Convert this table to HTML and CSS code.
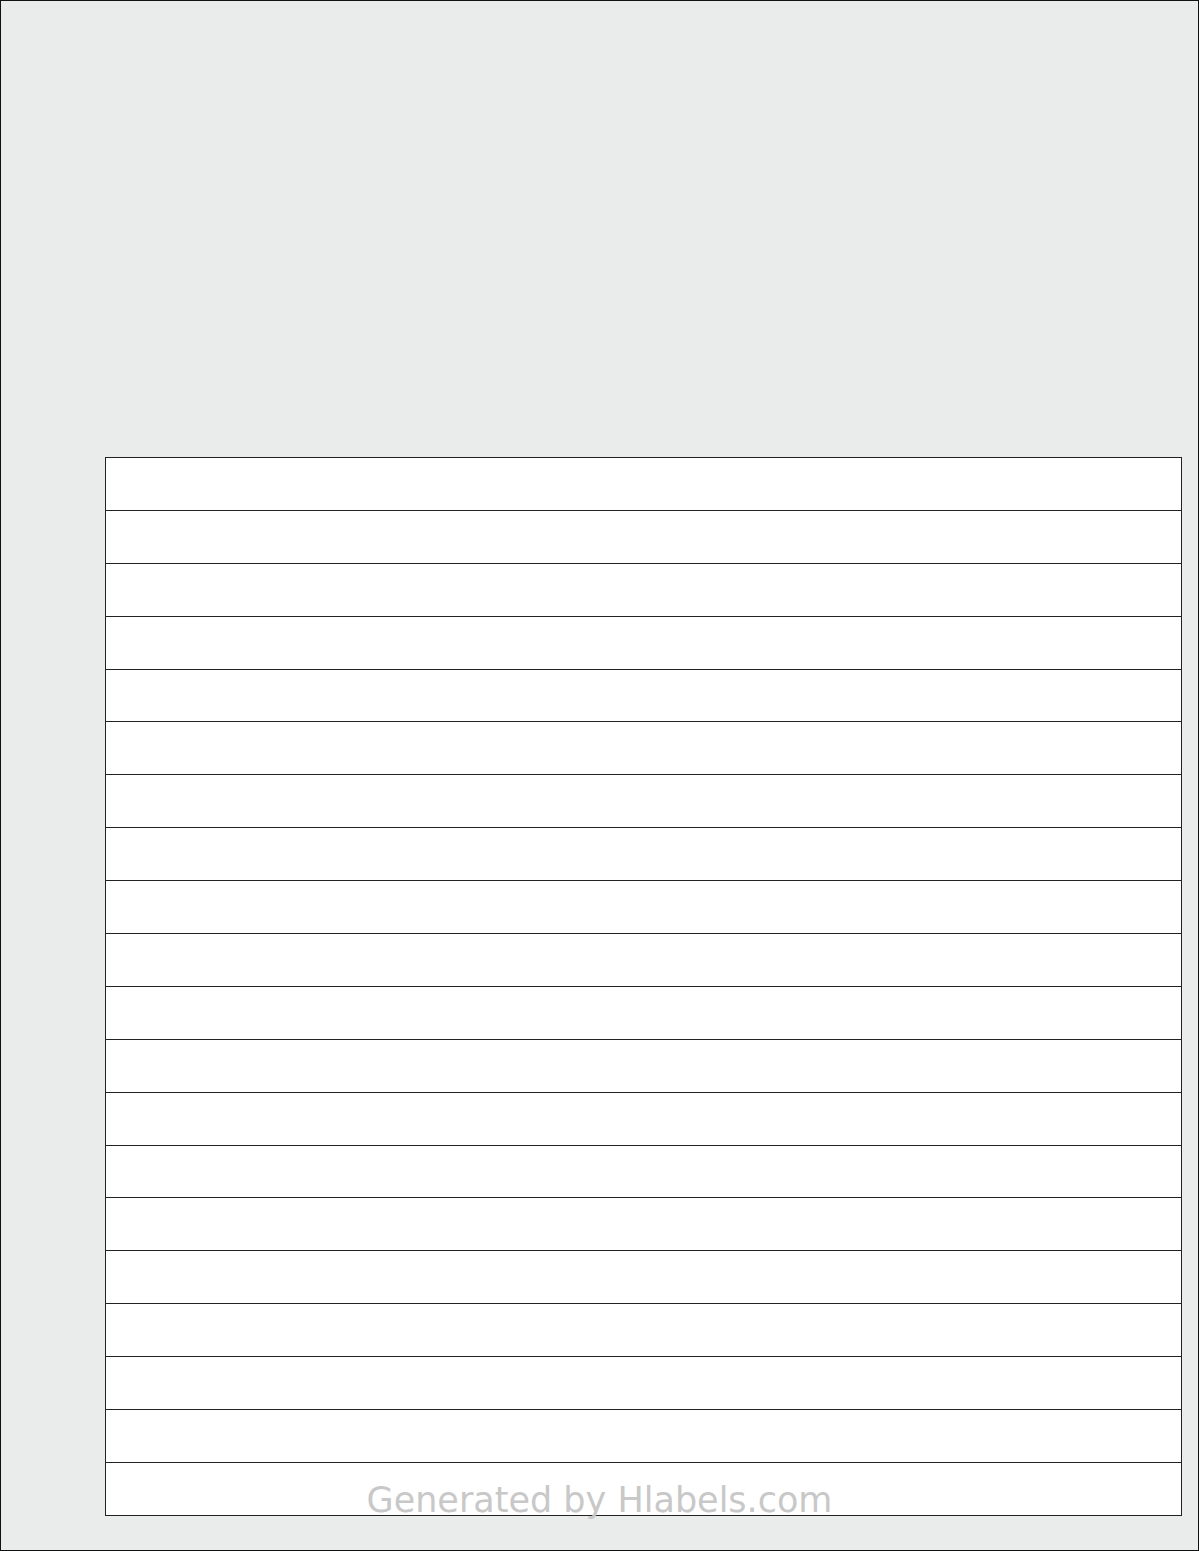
FILE: index.html
```html
<!DOCTYPE html>
<html lang="en">
<head>
    <meta charset="UTF-8">
    <title>Label Sheet</title>
    <link rel="stylesheet" href="styles.css">
</head>
<body>
    <div class="sheet">
        <div class="labels" id="labels"></div>
        <div class="watermark">Generated by Hlabels.com</div>
    </div>
    <script>
        // 20 strip labels
        const labels = document.getElementById('labels');
        for (let i = 0; i < 20; i++) {
            const label = document.createElement('div');
            label.classList.add('label');
            labels.appendChild(label);
        }
    </script>
</body>
</html>
```

FILE: styles.css
```css
body {
    margin: 0;
    padding: 0;
    font-family: "DejaVu Sans", sans-serif;
}
.sheet {
    position: relative;
    width: 1199px;
    height: 1551px;
    box-sizing: border-box;
    border: 1px solid #111;
    background-color: #eaeceb;
    padding: 456px 0 0 104px;
}
.labels {
    width: 1077px;
    box-sizing: border-box;
    border: 1px solid #222;
    border-bottom: none;
    background-color: #fff;
}
.label {
    height: 52.9px;
    box-sizing: border-box;
    border-bottom: 1px solid #222;
}
.watermark {
    position: absolute;
    left: 0;
    right: 0;
    top: 1482px;
    text-align: center;
    font-size: 35px;
    line-height: 1;
    color: #c8c8c8;
}
```
